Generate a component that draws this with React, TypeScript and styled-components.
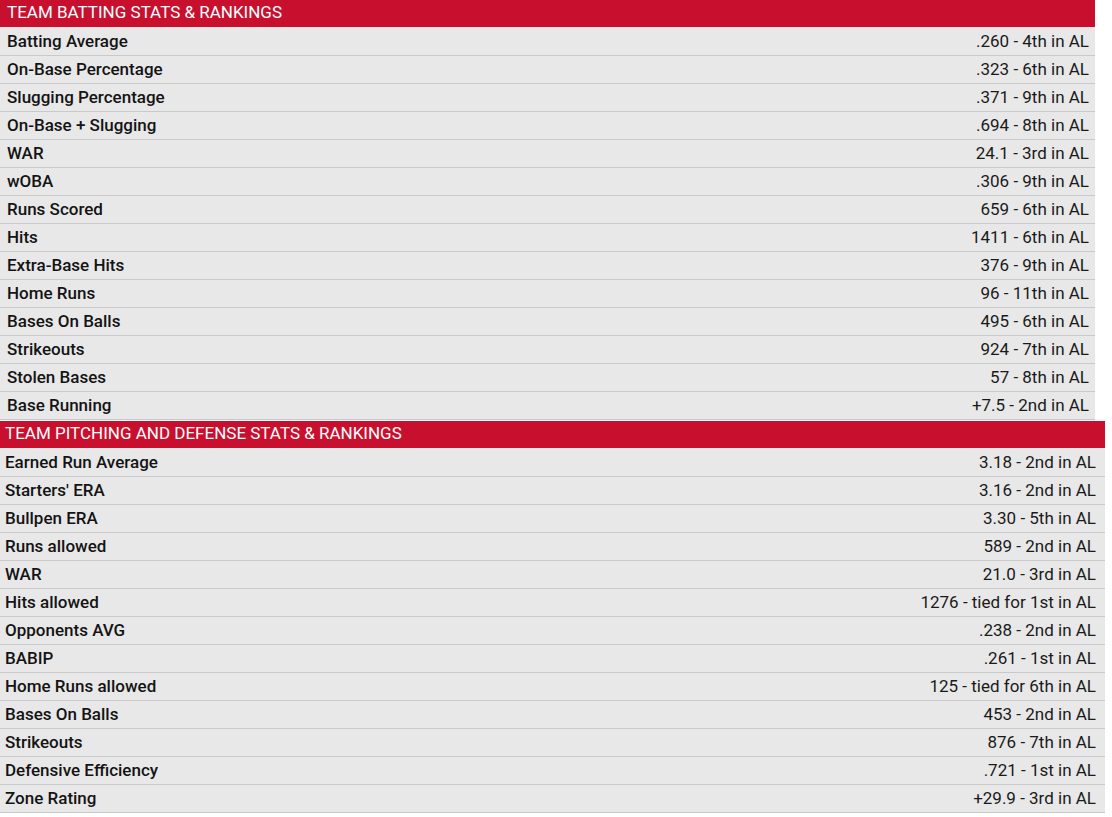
import styled, { createGlobalStyle } from 'styled-components';

const RED = '#c8102e';
const ROW_BG = '#e8e8e8';
const LINE = '#c9c9c9';

const GlobalStyle = createGlobalStyle`
  html, body {
    margin: 0;
    padding: 0;
    background: #ffffff;
  }
  body {
    font-family: Roboto, 'Liberation Sans', Arial, sans-serif;
    color: #111111;
  }
`;

const Page = styled.div`
  display: flex;
  flex-direction: column;
  gap: 1px;
`;

const StatsTable = styled.section<{ $width: number; $padLeft: number; $padRight: number }>`
  width: ${(p) => p.$width}px;
  display: flex;
  flex-direction: column;

  --pad-left: ${(p) => p.$padLeft}px;
  --pad-right: ${(p) => p.$padRight}px;
`;

const Header = styled.div`
  box-sizing: border-box;
  height: 27px;
  display: flex;
  align-items: center;
  padding: 0 0 3px var(--pad-left);
  background: ${RED};
  color: #ffffff;
  font-size: 17px;
  font-weight: 400;
  text-transform: uppercase;
  border-bottom: 1px solid ${ROW_BG};
  box-sizing: content-box;
  height: 24px;
`;

const Row = styled.div`
  height: 25px;
  display: flex;
  align-items: center;
  justify-content: space-between;
  padding: 0 var(--pad-right) 2px var(--pad-left);
  background: ${ROW_BG};
  border-bottom: 1px solid ${LINE};
  font-size: 17px;
`;

const Label = styled.span`
  font-weight: 500;
  color: #141414;
`;

const Value = styled.span`
  font-weight: 400;
  color: #1a1a1a;
`;

type Stat = [string, string];

const batting: Stat[] = [
  ['Batting Average', '.260 - 4th in AL'],
  ['On-Base Percentage', '.323 - 6th in AL'],
  ['Slugging Percentage', '.371 - 9th in AL'],
  ['On-Base + Slugging', '.694 - 8th in AL'],
  ['WAR', '24.1 - 3rd in AL'],
  ['wOBA', '.306 - 9th in AL'],
  ['Runs Scored', '659 - 6th in AL'],
  ['Hits', '1411 - 6th in AL'],
  ['Extra-Base Hits', '376 - 9th in AL'],
  ['Home Runs', '96 - 11th in AL'],
  ['Bases On Balls', '495 - 6th in AL'],
  ['Strikeouts', '924 - 7th in AL'],
  ['Stolen Bases', '57 - 8th in AL'],
  ['Base Running', '+7.5 - 2nd in AL'],
];

const pitching: Stat[] = [
  ['Earned Run Average', '3.18 - 2nd in AL'],
  ["Starters' ERA", '3.16 - 2nd in AL'],
  ['Bullpen ERA', '3.30 - 5th in AL'],
  ['Runs allowed', '589 - 2nd in AL'],
  ['WAR', '21.0 - 3rd in AL'],
  ['Hits allowed', '1276 - tied for 1st in AL'],
  ['Opponents AVG', '.238 - 2nd in AL'],
  ['BABIP', '.261 - 1st in AL'],
  ['Home Runs allowed', '125 - tied for 6th in AL'],
  ['Bases On Balls', '453 - 2nd in AL'],
  ['Strikeouts', '876 - 7th in AL'],
  ['Defensive Efficiency', '.721 - 1st in AL'],
  ['Zone Rating', '+29.9 - 3rd in AL'],
];

type SectionProps = {
  title: string;
  stats: Stat[];
  width: number;
  padLeft: number;
  padRight: number;
};

function StatsSection(props: SectionProps) {
  const { title, stats, width, padLeft, padRight } = props;
  return (
    <StatsTable $width={width} $padLeft={padLeft} $padRight={padRight}>
      <Header>{title}</Header>
      {stats.map(([label, value], index) => (
        <Row key={index}>
          <Label>{label}</Label>
          <Value>{value}</Value>
        </Row>
      ))}
    </StatsTable>
  );
}

export default function App() {
  return (
    <>
      <GlobalStyle />
      <Page>
        <StatsSection
          title='Team Batting Stats & Rankings'
          stats={batting}
          width={1095}
          padLeft={7}
          padRight={6}
        />
        <StatsSection
          title='Team Pitching and Defense Stats & Rankings'
          stats={pitching}
          width={1105}
          padLeft={5}
          padRight={9}
        />
      </Page>
    </>
  );
}
